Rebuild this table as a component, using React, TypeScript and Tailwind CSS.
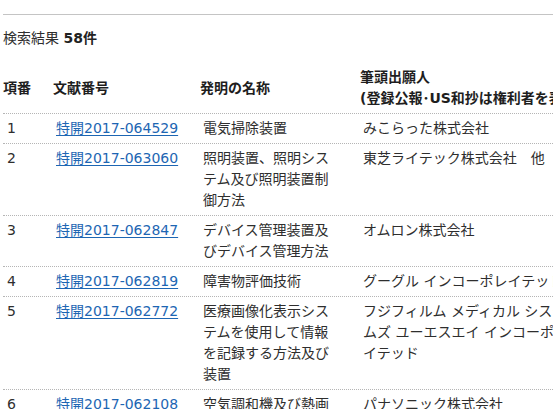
const rows = [
	{ no: 1, doc: "特開2017-064529", title: "電気掃除装置", applicant: "みこらった株式会社" },
	{ no: 2, doc: "特開2017-063060", title: "照明装置、照明システム及び照明装置制御方法", applicant: "東芝ライテック株式会社　他" },
	{ no: 3, doc: "特開2017-062847", title: "デバイス管理装置及びデバイス管理方法", applicant: "オムロン株式会社" },
	{ no: 4, doc: "特開2017-062819", title: "障害物評価技術", applicant: "グーグル インコーポレイテッド" },
	{ no: 5, doc: "特開2017-062772", title: "医療画像化表示システムを使用して情報を記録する方法及び装置", applicant: "フジフィルム メディカル システムズ ユーエスエイ インコーポレイテッド" },
	{ no: 6, doc: "特開2017-062108", title: "空気調和機及び熱画像センサシステム", applicant: "パナソニック株式会社" },
];

export default function App() {
	return (
		<div
			className="w-[553px] h-[409px] overflow-hidden bg-white text-[14px] leading-[21px] text-[#2e2e2e]"
			style={{ fontFamily: '"DejaVu Sans", "Noto Sans CJK JP", sans-serif' }}
		>
			<div className="pl-[3px] pt-[14px]">
				<div className="border-t border-[#c4c4c4]" />
				<p className="mt-[13px]">
					検索結果 <span className="font-bold text-[#222]">58件</span>
				</p>

				<div className="mt-[14px] w-[600px]">
					<div className="grid grid-cols-[50px_147px_160px_243px] border-b border-dotted border-[#b5b5b5] py-[4px] font-bold text-[#1e1e1e]">
						<div className="self-center">項番</div>
						<div className="self-center">文献番号</div>
						<div className="self-center">発明の名称</div>
						<div>
							<div>筆頭出願人</div>
							<div className="whitespace-nowrap">(登録公報･US和抄は権利者を表示)</div>
						</div>
					</div>

					{rows.map((r) => (
						<div
							key={r.no}
							className="grid grid-cols-[50px_147px_160px_243px] border-b border-dotted border-[#b5b5b5] py-[4px]"
						>
							<div className="pl-[4px]">{r.no}</div>
							<div className="pl-[3px]">
								<a href="#" className="text-[#1d66b3] underline underline-offset-[2px]">
									{r.doc}
								</a>
							</div>
							<div className="pl-[3px] pr-[23px]">{r.title}</div>
							<div className="pl-[3px] pr-[35px]">{r.applicant}</div>
						</div>
					))}
				</div>
			</div>
		</div>
	);
}
